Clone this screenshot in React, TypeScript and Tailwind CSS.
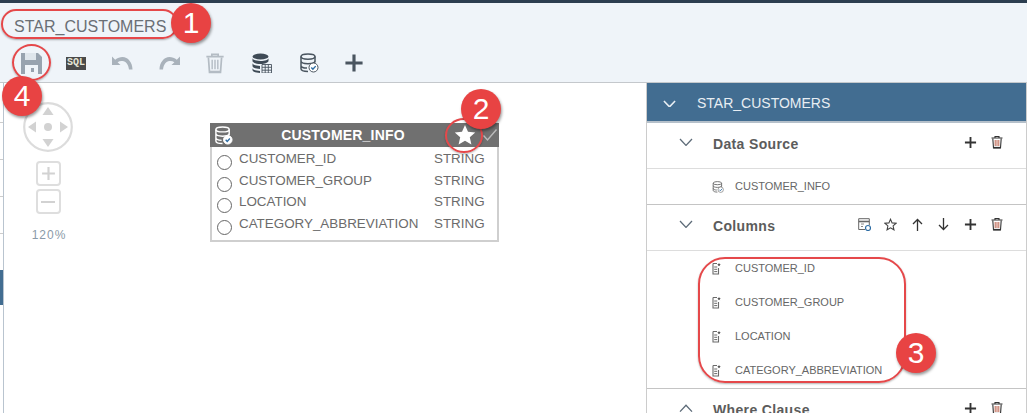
import React from "react";

const Plus = ({ s = 14, c = "#333", w = 2 }: { s?: number; c?: string; w?: number }) => (
  <svg width={s} height={s} viewBox="0 0 14 14"><path d="M7 1v12M1 7h12" stroke={c} strokeWidth={w} fill="none" /></svg>
);
const Trash = ({ s = 14, c = "#333", red = true }: { s?: number; c?: string; red?: boolean }) => (
  <svg width={s} height={s} viewBox="0 0 14 14" fill="none">
    <path d="M1.500 3h11M5 3V1.500h4V3" stroke={c} strokeWidth="1.100" />
    <path d="M2.800 3.500l.7 9.500h7l.7-9.500" stroke={c} strokeWidth="1.100" />
    <path d="M5.200 5v6M7 5v6M8.800 5v6" stroke={red ? "#b5533c" : c} strokeWidth="0.900" />
    <path d="M3.500 12.600h7" stroke={c} strokeWidth="1.400" />
  </svg>
);
const Chevron = ({ up, c = "#5d6b78", w = 1.300, size = 14 }: { up?: boolean; c?: string; w?: number; size?: number }) => (
  <svg width={size} height={size * 0.6} viewBox="0 0 14 8.400" fill="none">
    <path d={up ? "M1 7.600L7 1.200l6 6.400" : "M1 1l6 6.400L13 1"} stroke={c} strokeWidth={w} />
  </svg>
);
const DbCheck = ({ s = 20, c = "#4a5560" }: { s?: number; c?: string }) => (
  <svg width={s} height={s} viewBox="0 0 20 20" fill="none">
    <ellipse cx="9" cy="3.600" rx="7" ry="2.600" stroke={c} strokeWidth="1.500" />
    <path d="M2 3.600v12.200c0 1.500 3 2.700 7 2.700M16 3.600v6M2 8c0 1.500 3 2.700 7 2.700s7-1.200 7-2.700M2 12.400c0 1.500 3 2.600 6 2.700" stroke={c} strokeWidth="1.500" />
    <circle cx="14.500" cy="14.500" r="4.500" fill="#fff" stroke={c} strokeWidth="1" />
    <path d="M12.300 14.500l1.600 1.800 2.800-3.200" stroke="#2e6da4" strokeWidth="1.400" />
  </svg>
);
const ColIcon = () => (
  <svg width="9" height="13" viewBox="0 0 9 13" fill="none">
    <path d="M1 1.500h4M1 1.500v10.500h5.500V6" stroke="#6b6b6b" strokeWidth="1.100" />
    <path d="M2.200 5h3M2.200 7.300h3M2.200 9.600h3" stroke="#6b6b6b" strokeWidth="1" />
    <path d="M7 .8l.5 1.200 1.300.1-1 .8.3 1.300L7 3.500l-1.100.7.300-1.300-1-.8 1.300-.1z" fill="#555" />
  </svg>
);
const UndoIcon = ({ flip }: { flip?: boolean }) => (
  <svg width="21" height="14" viewBox="0 0 21 14" className={flip ? "-scale-x-100" : ""}>
    <path d="M0 .5V9h8.500L5.600 6.200C7 5.200 8.700 4.800 10.500 5c3.600.4 5.800 3.300 6.500 8.500h3.500C20.500 6.500 16 1 10.500 1 8 1 5.400 2 3.200 3.700z" fill="#a9b2bb" />
  </svg>
);
const Badge = ({ n, className }: { n: number; className: string }) => (
  <div className={`absolute w-[40px] h-[40px] rounded-full bg-[#e84343] text-white flex items-center justify-center text-[30px] leading-none shadow-[1px_2px_3px_rgba(0,0,0,0.4)] z-20 ${className}`}>{n}</div>
);
const Ring = ({ className }: { className: string }) => (
  <div className={`absolute border-[2.500px] border-[#e5484a] shadow-[0_1px_2px_rgba(0,0,0,0.3)] z-10 ${className}`} />
);
const ActionIcon = ({ children }: { children: React.ReactNode }) => (
  <div className="w-[26.500px] flex justify-center">{children}</div>
);
const SectionHead = ({ title, up, children }: { title: string; up?: boolean; children: React.ReactNode }) => (
  <div className="h-[45px] flex items-start pt-[13px] pl-[32px] pr-[16px] shrink-0">
    <div className="w-[34px] pt-[2px]"><Chevron up={up} /></div>
    <div className="text-[14px] font-bold text-[#5c5c5c] tracking-[0.35px] leading-[17px] flex-1">{title}</div>
    <div className="flex items-center -mt-[1px]">{children}</div>
  </div>
);
const Item = ({ label, icon }: { label: string; icon: React.ReactNode }) => (
  <div className="flex items-center pl-[65px]">
    <div className="w-[23px] flex">{icon}</div>
    <span className="text-[11px] text-[#666]">{label}</span>
  </div>
);

const cols = [
  ["CUSTOMER_ID", "STRING"],
  ["CUSTOMER_GROUP", "STRING"],
  ["LOCATION", "STRING"],
  ["CATEGORY_ABBREVIATION", "STRING"],
];

export default function App() {
  return (
    <div className="relative w-[1027px] h-[413px] overflow-hidden bg-white flex flex-col font-['Liberation_Sans',Arial,sans-serif]">
      <div className="h-[3px] bg-[#2c3e50] shrink-0" />

      <div className="h-[80px] bg-[#eff4f9] border-b border-[#c4c8cc] shrink-0 flex flex-col pl-[14px]">
        <div className="h-[41px] flex items-center pt-[7px] text-[16px] text-[#6a6f75]">STAR_CUSTOMERS</div>
        <div className="flex items-center h-[38px] -ml-[14px]">
          <div className="w-[62px] flex justify-center">
            <svg width="21" height="21" viewBox="0 0 21 21">
              <path d="M0 0h17l4 4v17H0z" fill="#98a3af" />
              <rect x="4" y="0" width="11" height="7" fill="#dfe6ec" />
              <rect x="4" y="12" width="13" height="9" fill="#eff4f9" />
              <rect x="10" y="15" width="3" height="4" fill="#98a3af" />
            </svg>
          </div>
          <div className="w-[28px] flex justify-center">
            <div className="bg-[#4a4a4a] w-[20px] h-[13px] shrink-0 flex items-center justify-center text-[10px] leading-none font-bold text-[#e6e6d8] font-['Liberation_Mono',monospace]">SQL</div>
          </div>
          <div className="w-[64px] flex justify-center"><UndoIcon /></div>
          <div className="w-[30px] flex justify-center"><UndoIcon flip /></div>
          <div className="w-[62px] flex justify-center"><Trash s={22} c="#b4bcc4" red={false} /></div>
          <div className="w-[32px] flex justify-center">
            <svg width="20" height="20" viewBox="0 0 20 20" fill="none">
              <ellipse cx="8.500" cy="3.500" rx="8" ry="3" fill="#3e4a56" />
              <path d="M.5 5c0 1.800 3.500 3 8 3s8-1.200 8-3v3c0 1.500-3.500 3-8 3s-8-1.500-8-3zM.5 10c0 1.800 3.500 3 7.500 3v3c-4 0-7.500-1.200-7.500-3zM.5 15c0 1.800 3.500 3 7.500 3v2c-4 0-7.500-1.200-7.500-3z" fill="#3e4a56" />
              <path d="M10 11.500h9.500v8.500H10zM10 14.300h9.500M10 17.200h9.500M13.200 11.500V20M16.300 11.500V20" stroke="#4a5560" strokeWidth=".9" />
            </svg>
          </div>
          <div className="w-[62px] flex justify-center"><DbCheck s={20} /></div>
          <div className="w-[28px] flex justify-center"><Plus s={20} c="#4a5560" w={2.200} /></div>
        </div>
      </div>

      <div className="flex-1 flex min-h-0">
        <div className="w-[4px] shrink-0 border-r border-[#b9c4cf] flex flex-col">
          <div className="h-[40px] border-b border-[#ccc] shrink-0" />
          <div className="h-[37px] border-b border-[#ccc] shrink-0" />
          <div className="h-[37px] border-b border-[#ccc] shrink-0" />
          <div className="h-[37px] border-b border-[#ccc] shrink-0" />
          <div className="h-[36px] shrink-0" />
          <div className="h-[35px] bg-[#426d91] shrink-0" />
        </div>

        <div className="relative w-[642px] shrink-0 pl-[19px] pt-[19px]">
          <div className="w-[50px] flex flex-col items-center">
            <svg width="50" height="50" viewBox="0 0 50 50">
              <circle cx="25" cy="25" r="23.800" fill="none" stroke="#dcdcdc" strokeWidth="2.200" />
              <path d="M25 5l5.500 8h-11zM25 45l-5.500-8h11zM5 25l8-5.500v11zM45 25l-8 5.500v-11z" fill="#d2d2d2" />
              <circle cx="25" cy="25" r="4" fill="#d2d2d2" />
            </svg>
            <div className="w-[25px] h-[25px] mt-[9px] rounded-[4px] border-2 border-[#dedede] flex items-center justify-center"><Plus s={15} c="#d2d2d2" /></div>
            <div className="w-[25px] h-[25px] mt-[3px] rounded-[4px] border-2 border-[#dedede] flex items-center justify-center">
              <div className="w-[14px] h-[2px] bg-[#d2d2d2]" />
            </div>
            <div className="mt-[14px] ml-[2px] text-[12px] leading-[14px] tracking-[1px] text-[#8a9aa8]">120%</div>
          </div>

          <div className="absolute left-[206px] top-[40px] w-[289px] h-[119px] border-2 border-[#cfcfcf] border-t-0 flex flex-col">
            <div className="-mx-[2px] h-[24px] bg-[#707070] flex items-center relative text-white shrink-0">
              <div className="w-[30px] pl-[4px] flex"><DbCheck s={19} c="#fff" /></div>
              <div className="absolute left-[71px] w-[124px] text-center text-[14px] font-bold tracking-[0.2px]">CUSTOMER_INFO</div>
              <div className="absolute left-[244px]">
                <svg width="22" height="22" viewBox="0 0 22 22"><path d="M11 1l3 6.800 7.200.7-5.400 4.800 1.600 7.200L11 16.800l-6.400 3.700 1.600-7.200L.8 8.500 8 7.800z" fill="#fff" /></svg>
              </div>
              <div className="absolute left-[272px]">
                <svg width="16" height="14" viewBox="0 0 16 14" fill="none"><path d="M1.500 7.500l4 4.500L14.500 1.500" stroke="#bbb" strokeWidth="1.400" /></svg>
              </div>
            </div>
            <div className="flex flex-col pt-[1px] pl-[5px]">
              {cols.map(([n, t]) => (
                <div key={n} className="h-[21.700px] flex items-start text-[13.400px] leading-[21px] text-[#6b6b6b]">
                  <div className="w-[15px] h-[15px] rounded-full border-[1.500px] border-[#666] mt-[7px] mr-[7px] shrink-0" />
                  <span className="w-[195px] shrink-0">{n}</span>
                  <span>{t}</span>
                </div>
              ))}
            </div>
          </div>
        </div>

        <div className="flex-1 border-l border-[#ccc] border-r flex flex-col min-w-0">
          <div className="h-[40px] bg-[#426d91] border-b-2 border-[#b5c0ca] flex items-center pl-[16px] pt-[3px] shrink-0">
            <div className="w-[34px]"><Chevron c="#e8eef3" w={1.700} size={13} /></div>
            <span className="text-[14px] text-[#e8eef3]">STAR_CUSTOMERS</span>
          </div>
          <div className="border-b border-[#ddd] shrink-0">
            <SectionHead title="Data Source">
              <ActionIcon><Plus s={13} c="#333" /></ActionIcon>
              <ActionIcon><Trash s={14} /></ActionIcon>
            </SectionHead>
          </div>
          <div className="h-[36px] flex items-center border-b border-[#c4c4c4] shrink-0">
            <Item label="CUSTOMER_INFO" icon={<DbCheck s={12} c="#666" />} />
          </div>
          <div className="border-b border-[#ddd] shrink-0">
            <SectionHead title="Columns">
              <ActionIcon>
                <svg width="13" height="13" viewBox="0 0 13 13" fill="none">
                  <path d="M7 11.500H.7V.7h10.600V7" stroke="#666" strokeWidth="1" />
                  <path d="M.7 3.500h10.600" stroke="#666" strokeWidth="1.600" />
                  <path d="M3 6h3M3 8.500h2" stroke="#888" strokeWidth="1" />
                  <circle cx="10" cy="10" r="2.500" stroke="#2e6da4" strokeWidth="1.200" />
                </svg>
              </ActionIcon>
              <ActionIcon>
                <svg width="13" height="13" viewBox="0 0 22 22"><path d="M11 2l2.700 6.300 6.800.6-5.100 4.500 1.500 6.600L11 16.600 5.100 20l1.500-6.600L1.500 8.900l6.800-.6z" fill="none" stroke="#444" strokeWidth="1.800" /></svg>
              </ActionIcon>
              <ActionIcon>
                <svg width="11" height="13" viewBox="0 0 11 13" fill="none"><path d="M5.500 13V1.500M1 6l4.500-4.500L10 6" stroke="#333" strokeWidth="1.300" /></svg>
              </ActionIcon>
              <ActionIcon>
                <svg width="11" height="13" viewBox="0 0 11 13" fill="none"><path d="M5.500 0v11.500M1 7l4.500 4.500L10 7" stroke="#333" strokeWidth="1.300" /></svg>
              </ActionIcon>
              <ActionIcon><Plus s={13} c="#333" /></ActionIcon>
              <ActionIcon><Trash s={14} /></ActionIcon>
            </SectionHead>
          </div>
          <div className="h-[138px] border-b border-[#c4c4c4] flex flex-col shrink-0">
            {cols.map(([n]) => (
              <div key={n} className="h-[34px] flex items-center"><Item label={n} icon={<ColIcon />} /></div>
            ))}
          </div>
          <SectionHead title="Where Clause" up>
            <ActionIcon><Plus s={13} c="#333" /></ActionIcon>
            <ActionIcon><Trash s={14} /></ActionIcon>
          </SectionHead>
        </div>
      </div>

      <Ring className="left-[1px] top-[9px] w-[177px] h-[30px] rounded-full" />
      <Badge n={1} className="left-[171px] top-[3px]" />
      <Ring className="left-[12px] top-[44px] w-[39px] h-[37px] rounded-[50%]" />
      <Badge n={4} className="left-[2px] top-[76px]" />
      <Ring className="left-[445px] top-[118px] w-[38px] h-[35px] rounded-[50%]" />
      <Badge n={2} className="left-[461px] top-[89px]" />
      <Ring className="left-[698px] top-[257px] w-[208px] h-[126px] rounded-[27px]" />
      <Badge n={3} className="left-[896px] top-[333px]" />
    </div>
  );
}
